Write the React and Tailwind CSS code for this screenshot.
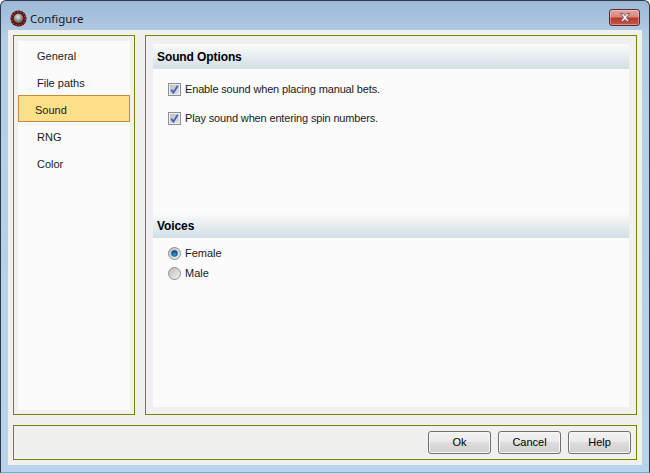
import React from "react";

function Logo() {
  return (
    <svg width="17" height="17" viewBox="0 0 18 18" className="shrink-0">
      <defs>
        <radialGradient id="lg" cx="45%" cy="35%" r="65%">
          <stop offset="0%" stopColor="#e8e8e8" />
          <stop offset="60%" stopColor="#8c8c8c" />
          <stop offset="100%" stopColor="#4a4a4a" />
        </radialGradient>
      </defs>
      <circle cx="9" cy="9" r="8.5" fill="#2a1a14" />
      <circle cx="9" cy="9" r="7.2" fill="none" stroke="#c02a1c" strokeWidth="2" strokeDasharray="2 1.2" />
      <circle cx="9" cy="9" r="5.2" fill="url(#lg)" />
    </svg>
  );
}

function CloseBtn() {
  return (
    <div className="w-[31px] h-[17px] rounded-[3px] border border-[#5a2a34] bg-[linear-gradient(#e2a59c_0%,#d6877b_45%,#b9392c_55%,#c9574a_100%)] flex items-center justify-center shadow-[inset_0_0_0_1px_rgba(255,255,255,0.35)]">
      <svg width="14" height="11" viewBox="0 0 14 11">
        <path d="M2.5 1.5 L5 1.5 L7 3.6 L9 1.5 L11.5 1.5 L8.5 5.5 L11.5 9.5 L9 9.5 L7 7.4 L5 9.5 L2.5 9.5 L5.5 5.5 Z" fill="#f2f2f2" stroke="#5b4a50" strokeWidth="0.8" />
      </svg>
    </div>
  );
}

function Check({ label, className }) {
  return (
    <div className={`flex items-center gap-[4px] h-[13px] ${className}`}>
      <div className="w-[13px] h-[13px] border border-[#8e8f8f] bg-[linear-gradient(135deg,#b9bdc6,#e2e4e9)] flex items-center justify-center shadow-[inset_0_0_0_1px_#eceef1]">
        <svg width="11" height="11" viewBox="0 0 11 11">
          <path d="M2.2 5.6 L4.4 8.6 L8.8 1.8" fill="none" stroke="#4a62b4" strokeWidth="1.8" />
        </svg>
      </div>
      <span className="tracking-[-0.15px]">{label}</span>
    </div>
  );
}

function Radio({ label, on, className }) {
  return (
    <div className={`flex items-center gap-[4px] h-[13px] ${className}`}>
      <svg width="13" height="13" viewBox="0 0 13 13">
        <defs>
          <linearGradient id={on ? "rg1" : "rg2"} x1="0" y1="0" x2="1" y2="1">
            <stop offset="0%" stopColor="#b8babd" />
            <stop offset="100%" stopColor="#f4f4f4" />
          </linearGradient>
          <radialGradient id="rb" cx="50%" cy="65%" r="60%">
            <stop offset="0%" stopColor="#25a5e0" />
            <stop offset="100%" stopColor="#0a3f6a" />
          </radialGradient>
        </defs>
        <circle cx="6.5" cy="6.5" r="6" fill={on ? "url(#rg1)" : "url(#rg2)"} stroke="#8e8f8f" />
        {on && <circle cx="6.5" cy="6.5" r="3.2" fill="url(#rb)" />}
      </svg>
      <span>{label}</span>
    </div>
  );
}

function Section({ children }) {
  return (
    <div className="h-[25px] pl-[4px] flex items-center font-bold text-[12px] tracking-[-0.1px] text-black bg-[linear-gradient(#fbfbfb_0%,#e6ecef_50%,#d3dfe6_100%)]">
      {children}
    </div>
  );
}

function Btn({ children }) {
  return (
    <div className="w-[63px] h-[23px] pb-[1px] rounded-[3px] border border-[#707070] flex items-center justify-center bg-[linear-gradient(#f2f2f2_0%,#ebebeb_45%,#dddddd_50%,#cfcfcf_100%)] shadow-[inset_0_0_0_1px_#f8f8f8] text-black">
      {children}
    </div>
  );
}

export default function App() {
  const items = ["General", "File paths", "Sound", "RNG", "Color"];
  return (
    <div className="relative w-[650px] h-[473px] overflow-hidden border border-[#2b3a46] border-b-[#3fc0e8] rounded-t-[6px] px-[7px] pb-[7px] flex flex-col bg-[linear-gradient(#9db9d6_0%,#b5cee7_8%,#bad3ec_100%)] font-['Liberation_Sans',sans-serif] text-[11px] text-[#1a1a1a]">
      <div className="h-[29px] shrink-0 flex items-center pl-[2px] gap-[3px] pt-[6px] pr-[2px]">
        <Logo />
        <span className="font-['Noto_Sans',sans-serif] text-[11.5px] text-[#101820] flex-1">Configure</span>
        <div className="mt-[-2px]"><CloseBtn /></div>
      </div>
      <div className="flex-1 bg-[#f0f0ee] p-[5px] flex flex-col gap-[10px]">
        <div className="flex gap-[10px] h-[380px]">
          <div className="w-[122px] border border-[#808000] pt-[5px] pb-[4px] px-[4px]">
            <div className="h-full bg-[#fbfbfb]">
              {items.map((it) =>
                it === "Sound" ? (
                  <div key={it} className="h-[27px] bg-[#ffe08a] border border-[#c88a3c] flex items-center pl-[16px] pt-[3px]">{it}</div>
                ) : (
                  <div key={it} className="h-[27px] flex items-center pl-[19px] pt-[3px]">{it}</div>
                )
              )}
            </div>
          </div>
          <div className="w-[492px] border border-[#808000] pt-[8px] pb-[7px] px-[7px]">
            <div className="h-full bg-[#fbfbfb]">
              <Section>Sound Options</Section>
              <Check label="Enable sound when placing manual bets." className="ml-[15px] mt-[14px]" />
              <Check label="Play sound when entering spin numbers." className="ml-[15px] mt-[16px]" />
              <div className="mt-[88px]"><Section>Voices</Section></div>
              <Radio on label="Female" className="ml-[15px] mt-[9px]" />
              <Radio label="Male" className="ml-[15px] mt-[7px]" />
            </div>
          </div>
        </div>
        <div className="h-[35px] border border-[#808000] flex items-center justify-end gap-[7px] pr-[5px]">
          <Btn>Ok</Btn>
          <Btn>Cancel</Btn>
          <Btn>Help</Btn>
        </div>
      </div>
    </div>
  );
}
